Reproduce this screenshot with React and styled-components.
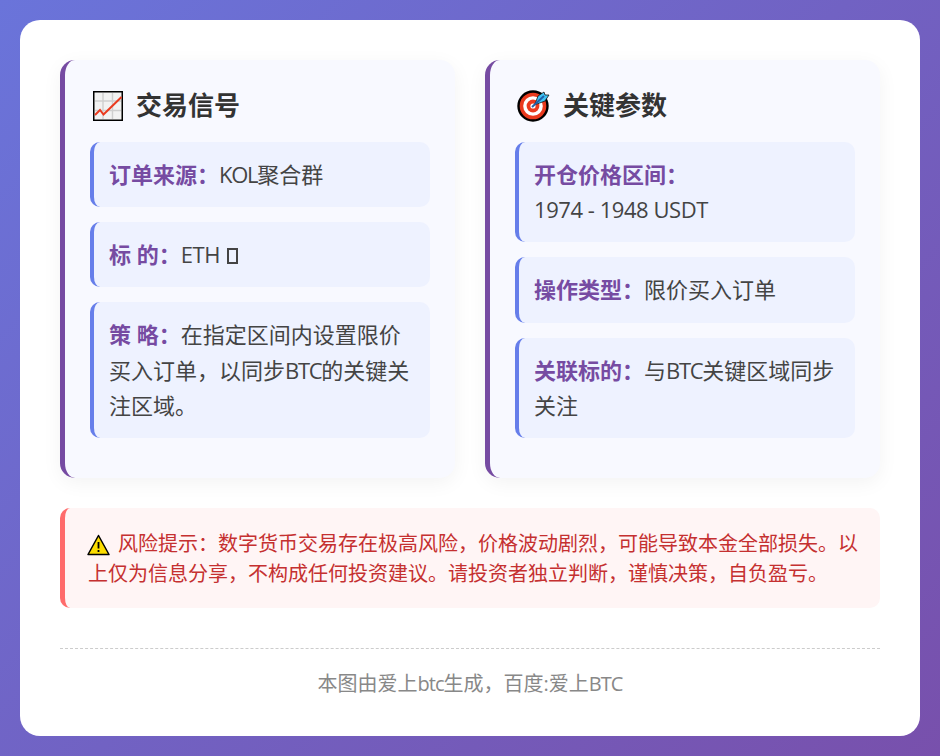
import React from "react";
import styled, { createGlobalStyle } from "styled-components";

const Global = createGlobalStyle`
  html, body { margin: 0; padding: 0; }
  body {
    font-family: "Open Sans", "Noto Sans CJK SC", sans-serif;
    line-height: 1.6;
    color: #333;
  }
  * { box-sizing: border-box; }
`;
const Page = styled.div`
  width: 940px;
  height: 756px;
  padding: 20px;
  background: linear-gradient(135deg, #6a74da 0%, #7850ac 100%);
`;
const Card = styled.div`
  height: 716px;
  background: #fff;
  border-radius: 20px;
  padding: 40px;
`;
const Columns = styled.div`
  display: grid;
  grid-template-columns: 1fr 1fr;
  gap: 30px;
  margin-bottom: 30px;
`;
const Panel = styled.section`
  background: #f8f9ff;
  border-left: 5px solid #764ba2;
  border-radius: 15px;
  padding: 25px;
  box-shadow: 0 5px 20px rgba(0, 0, 0, 0.05);
`;
const Title = styled.h2`
  display: flex;
  align-items: center;
  gap: 12px;
  margin: 0 0 15.4px;
  padding-left: 2px;
  font-size: 26px;
  font-weight: 700;
  line-height: 1.6;
  color: #333;
`;
const Item = styled.div`
  background: #eef2ff;
  border-left: 4px solid #667eea;
  border-radius: 10px;
  padding: 15px;
  margin-bottom: 15px;
  font-size: 22px;
  line-height: 1.6;
  color: #444;
`;
const Label = styled.strong`
  color: #764ba2;
  font-weight: 700;
`;
const Latin = styled.span`
  letter-spacing: ${(p) => p.$tight}px;
`;
const Tofu = styled.span`
  display: inline-block;
  width: 11px;
  height: 16px;
  margin-left: 7px;
  border: 2px solid #444;
  vertical-align: -1px;
`;
const Warning = styled.div`
  background: #fff5f5;
  border-left: 5px solid #ff6b6b;
  border-radius: 10px;
  padding: 21px 20px 19px 23px;
  font-size: 20px;
  line-height: 1.5;
  color: #c53030;
`;
const WarnIcon = styled.svg`
  width: 23px;
  height: 22px;
  vertical-align: -5px;
  margin: 0 8px 0 -1px;
`;
const Footer = styled.footer`
  margin-top: 40px;
  padding-top: 19px;
  border-top: 1px dashed #ccc;
  text-align: center;
  font-size: 20px;
  color: #888;
`;

const ChartIcon = () => (
  <svg width="32" height="32" viewBox="0 0 32 32" aria-hidden="true">
    <rect x="1.750" y="1.750" width="28.500" height="28.500" fill="#f2f2f2" stroke="#000" strokeWidth="1.500" />
    <path d="M11 3v26M20.500 3v26M3 11h26M3 20.500h26" stroke="#cfcfcf" strokeWidth="1.400" fill="none" />
    <path d="M3 25l5-5 3.500 4.500L29.500 7" stroke="#ea3a1e" strokeWidth="2" fill="none" />
  </svg>
);
const TargetIcon = () => (
  <svg width="34" height="34" viewBox="0 0 34 34" aria-hidden="true">
    <circle cx="16" cy="17" r="14.500" fill="#ea3a1e" stroke="#000" strokeWidth="2.400" />
    <circle cx="16" cy="17" r="9.800" fill="#fff" />
    <circle cx="16" cy="17" r="6.400" fill="#ea3a1e" />
    <circle cx="16" cy="17" r="2.600" fill="#fff" />
    <path d="M18 15l3-8 6-4 1 3 4 0-4 6-8 3z" fill="#3fc3f3" stroke="#111" strokeWidth="0.800" />
    <path d="M15 18L27 7" stroke="#1f5fa8" strokeWidth="2" />
  </svg>
);

export default function App() {
  return (
    <>
      <Global />
      <Page>
        <Card>
          <Columns>
            <Panel>
              <Title><ChartIcon />交易信号</Title>
              <Item><Label>订单来源：</Label><Latin $tight={-1.3}>KOL</Latin>聚合群</Item>
              <Item><Label>标 的：</Label><Latin $tight={-0.4}>ETH</Latin><Tofu /></Item>
              <Item><Label>策 略：</Label>在指定区间内设置限价买入订单，以同步<Latin $tight={-1.3}>BTC</Latin>的关键关注区域。</Item>
            </Panel>
            <Panel>
              <Title><TargetIcon />关键参数</Title>
              <Item><Label>开仓价格区间：</Label><br /><Latin $tight={-0.45}>1974 - 1948 USDT</Latin></Item>
              <Item><Label>操作类型：</Label>限价买入订单</Item>
              <Item><Label>关联标的：</Label>与<Latin $tight={-1.3}>BTC</Latin>关键区域同步关注</Item>
            </Panel>
          </Columns>
          <Warning>
            <WarnIcon viewBox="0 0 23 22" aria-hidden="true">
              <path d="M11.500 1.500L22 20.500H1z" fill="#fcdc00" stroke="#000" strokeWidth="1.500" strokeLinejoin="round" />
              <path d="M11.500 8v6.500M11.500 16v2" stroke="#000" strokeWidth="1.800" />
            </WarnIcon>
            风险提示：数字货币交易存在极高风险，价格波动剧烈，可能导致本金全部损失。以上仅为信息分享，不构成任何投资建议。请投资者独立判断，谨慎决策，自负盈亏。
          </Warning>
          <Footer>本图由爱上<Latin $tight={-1}>btc</Latin>生成，百度:爱上<Latin $tight={-1}>BTC</Latin></Footer>
        </Card>
      </Page>
    </>
  );
}
